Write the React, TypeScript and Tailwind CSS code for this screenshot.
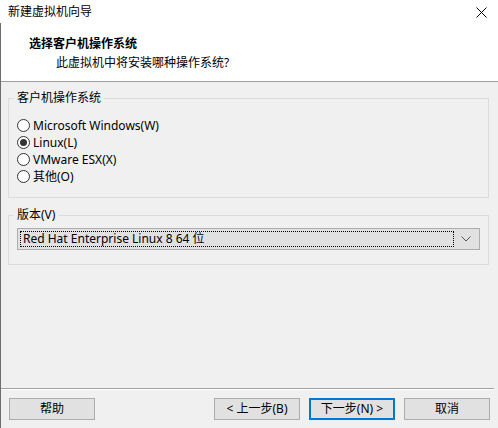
import React from "react";

const font = { fontFamily: '"Noto Sans", "Noto Sans CJK SC", sans-serif' };

const options = ["Microsoft Windows(W)", "Linux(L)", "VMware ESX(X)", "其他(O)"];

function Radio({ checked }: { checked?: boolean }) {
  return (
    <span className="flex h-[13px] w-[13px] items-center justify-center rounded-full border border-[#333333] bg-white">
      {checked && <span className="h-[7px] w-[7px] rounded-full bg-[#333333]" />}
    </span>
  );
}

function Button({ label, focused }: { label: string; focused?: boolean }) {
  return (
    <button
      className={
        "flex h-[22px] w-[86px] items-center justify-center bg-[#e1e1e1] text-[12px] text-black " +
        (focused ? "border-2 border-[#0078d7]" : "border border-[#adadad]")
      }
    >
      {label}
    </button>
  );
}

export default function App() {
  return (
    <div className="flex h-[428px] w-[498px] flex-col bg-white text-[12px] leading-[16px] text-black" style={font}>
      {/* title bar */}
      <div className="flex h-[23px] items-center justify-between pl-[8px] pr-[10px] pt-[1px]">
        <span>新建虚拟机向导</span>
        <svg width="11" height="11" viewBox="0 0 11 11" className="mr-[1px]">
          <path d="M0.5 0.5 L10.5 10.5 M10.5 0.5 L0.5 10.5" stroke="#000" strokeWidth="1" />
        </svg>
      </div>

      <div className="flex flex-1 flex-col border-l border-[#6e6e6e]">
        {/* header */}
        <div className="h-[59px] border-b border-[#a0a0a0] bg-white">
          <div className="pl-[28px] pt-[13px] font-bold">选择客户机操作系统</div>
          <div className="pl-[55px] pt-[3px]">此虚拟机中将安装哪种操作系统?</div>
        </div>

        <div className="flex flex-1 flex-col bg-[#f0f0f0] pt-[8px]">
          <fieldset className="ml-[7px] mr-[9px] border border-[#dcdcdc] pb-[12px]">
            <legend className="ml-[5px] px-[3px]">客户机操作系统</legend>
            <div className="mt-[11px] flex flex-col pl-[8px]">
              {options.map((o, i) => (
                <label key={o} className="flex h-[17px] items-center gap-[3px]">
                  <Radio checked={i === 1} />
                  <span>{o}</span>
                </label>
              ))}
            </div>
          </fieldset>

          <fieldset className="ml-[7px] mr-[9px] mt-[9px] border border-[#dcdcdc] pb-[14px]">
            <legend className="ml-[5px] px-[3px]">版本(V)</legend>
            <div className="mx-[8px] mt-[5px] flex h-[22px] items-center border border-[#adadad] bg-[#e1e1e1] pl-[2px] pr-[8px]">
              <div className="flex h-[16px] flex-1 items-center border border-dotted border-black pl-[2px]">
                Red Hat Enterprise Linux 8 64 位
              </div>
              <svg width="10" height="6" viewBox="0 0 10 6" className="ml-[7px]">
                <path d="M0.5 0.5 L5 5 L9.5 0.5" stroke="#555" strokeWidth="1" fill="none" />
              </svg>
            </div>
          </fieldset>

          {/* footer */}
          <div className="mt-auto">
            <div className="mr-[4px] border-t border-[#a0a0a0] border-b border-b-white" />
            <div className="flex items-center pb-[8px] pl-[8px] pr-[8px] pt-[8px]">
              <Button label="帮助" />
              <div className="ml-auto flex gap-[9px]">
                <Button label="< 上一步(B)" />
                <Button label="下一步(N) >" focused />
                <Button label="取消" />
              </div>
            </div>
          </div>
        </div>
      </div>
    </div>
  );
}
